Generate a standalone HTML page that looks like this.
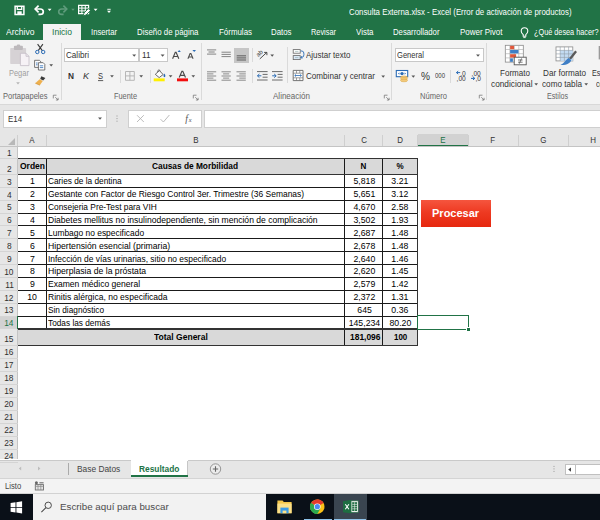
<!DOCTYPE html>
<html><head><meta charset="utf-8"><title>Excel</title>
<style>
*{box-sizing:border-box;margin:0;padding:0}
html,body{width:600px;height:520px;overflow:hidden;background:#fff;font-family:"Liberation Sans",sans-serif;}
.a{position:absolute}
.t{position:absolute;white-space:nowrap;line-height:1}
svg{position:absolute;overflow:visible}
</style></head><body>
<div class="a" style="left:0px;top:0px;width:600.00px;height:40.00px;background:#217346;"></div>
<div class="a" style="left:43px;top:24px;width:37.50px;height:17.00px;background:#f3f3f3;"></div>
<div class="a" style="left:0px;top:40px;width:600.00px;height:63.50px;background:#f3f3f3;"></div>
<div class="a" style="left:0px;top:103.5px;width:600.00px;height:1.00px;background:#d8d8d8;"></div>
<div class="a" style="left:0px;top:104.5px;width:600.00px;height:28.50px;background:#e6e6e6;"></div>
<div class="a" style="left:60.75px;top:43px;width:1.00px;height:57.00px;background:#dadada;"></div>
<div class="a" style="left:201px;top:43px;width:1.00px;height:57.00px;background:#dadada;"></div>
<div class="a" style="left:391px;top:43px;width:1.00px;height:57.00px;background:#dadada;"></div>
<div class="a" style="left:486px;top:43px;width:1.00px;height:57.00px;background:#dadada;"></div>
<div class="a" style="left:119.5px;top:70px;width:1.00px;height:12.50px;background:#dadada;"></div>
<div class="a" style="left:149.5px;top:70px;width:1.00px;height:12.50px;background:#dadada;"></div>
<div class="a" style="left:251.5px;top:48px;width:1.00px;height:14.00px;background:#dadada;"></div>
<div class="a" style="left:251.5px;top:69px;width:1.00px;height:13.50px;background:#dadada;"></div>
<div class="a" style="left:287.2px;top:47.3px;width:1.00px;height:35.70px;background:#dadada;"></div>
<div class="a" style="left:450px;top:69.5px;width:1.00px;height:13.00px;background:#dadada;"></div>
<div class="a" style="left:64px;top:47.7px;width:74.50px;height:14.80px;background:#fff;border:1px solid #c8c8c8;"></div>
<div class="a" style="left:139px;top:47.7px;width:29.00px;height:14.80px;background:#fff;border:1px solid #c8c8c8;"></div>
<div class="a" style="left:394.5px;top:47.7px;width:89.50px;height:14.80px;background:#fff;border:1px solid #c8c8c8;"></div>
<div class="a" style="left:234px;top:47.7px;width:15.00px;height:15.00px;background:#c6c6c6;"></div>
<div class="a" style="left:3px;top:109.5px;width:104.00px;height:18.00px;background:#fff;border:1px solid #cfcfcf;"></div>
<div class="a" style="left:127.5px;top:109.5px;width:74.00px;height:18.00px;background:#fff;border:1px solid #cfcfcf;"></div>
<div class="a" style="left:204px;top:109.5px;width:400.00px;height:18.00px;background:#fff;border:1px solid #cfcfcf;"></div>
<div class="a" style="left:0px;top:459.5px;width:600.00px;height:18.50px;background:#e6e6e6;border-top:1px solid #c9c9c9;"></div>
<div class="a" style="left:130.5px;top:459.5px;width:57.00px;height:16.00px;background:#fff;"></div>
<div class="a" style="left:130.5px;top:475px;width:57.00px;height:1.50px;background:#217346;"></div>
<div class="a" style="left:187px;top:460.5px;width:1.00px;height:14.50px;background:#c6c6c6;"></div>
<div class="a" style="left:67.5px;top:463px;width:1.00px;height:12.00px;background:#aaa;"></div>
<div class="a" style="left:564.6px;top:464.2px;width:39.40px;height:10.40px;background:#fff;border:1px solid #c0c0c0;"></div>
<div class="a" style="left:574.6px;top:464.2px;width:1.00px;height:10.40px;background:#c0c0c0;"></div>
<div class="a" style="left:0px;top:477.7px;width:600.00px;height:15.30px;background:#f3f3f3;border-top:1px solid #d4d4d4;"></div>
<div class="a" style="left:0px;top:492.8px;width:600.00px;height:1.20px;background:#d2d2d2;"></div>
<div class="a" style="left:0px;top:493.9px;width:600.00px;height:26.10px;background:#0a1018;"></div>
<div class="a" style="left:32.6px;top:493.9px;width:233.40px;height:26.10px;background:#f2f2f2;"></div>
<div class="a" style="left:334px;top:493.9px;width:32.50px;height:26.10px;background:#3a4550;"></div>
<div class="a" style="left:334px;top:518.5px;width:32.00px;height:1.50px;background:#8fc3ea;"></div>
<div class="a" style="left:304px;top:518.5px;width:28.00px;height:1.50px;background:#8fc3ea;"></div>
<div class="a" style="left:0px;top:133px;width:600.00px;height:13.00px;background:#e6e6e6;"></div>
<div class="a" style="left:0px;top:145.5px;width:600.00px;height:1.00px;background:#c4c4c4;"></div>
<div class="a" style="left:417.5px;top:134px;width:50.50px;height:12.00px;background:#d2d2d2;"></div>
<div class="a" style="left:417.5px;top:144.9px;width:50.50px;height:1.40px;background:#217346;"></div>
<div class="a" style="left:45.8px;top:135px;width:1.00px;height:11.00px;background:#cfcfcf;"></div>
<div class="a" style="left:344.3px;top:135px;width:1.00px;height:11.00px;background:#cfcfcf;"></div>
<div class="a" style="left:382.0px;top:135px;width:1.00px;height:11.00px;background:#cfcfcf;"></div>
<div class="a" style="left:417.0px;top:135px;width:1.00px;height:11.00px;background:#cfcfcf;"></div>
<div class="a" style="left:467.5px;top:135px;width:1.00px;height:11.00px;background:#cfcfcf;"></div>
<div class="a" style="left:517.5px;top:135px;width:1.00px;height:11.00px;background:#cfcfcf;"></div>
<div class="a" style="left:567.5px;top:135px;width:1.00px;height:11.00px;background:#cfcfcf;"></div>
<div class="a" style="left:17px;top:135px;width:1.00px;height:11.00px;background:#cfcfcf;"></div>
<div class="a" style="left:0px;top:146.5px;width:17.50px;height:312.50px;background:#e6e6e6;"></div>
<div class="a" style="left:17px;top:146.5px;width:1.00px;height:312.50px;background:#c4c4c4;"></div>
<div class="a" style="left:0px;top:157.5px;width:17.50px;height:1.00px;background:#d4d4d4;"></div>
<div class="a" style="left:0px;top:173.9px;width:17.50px;height:1.00px;background:#d4d4d4;"></div>
<div class="a" style="left:0px;top:186.78px;width:17.50px;height:1.00px;background:#d4d4d4;"></div>
<div class="a" style="left:0px;top:199.66px;width:17.50px;height:1.00px;background:#d4d4d4;"></div>
<div class="a" style="left:0px;top:212.54000000000002px;width:17.50px;height:1.00px;background:#d4d4d4;"></div>
<div class="a" style="left:0px;top:225.42000000000002px;width:17.50px;height:1.00px;background:#d4d4d4;"></div>
<div class="a" style="left:0px;top:238.3px;width:17.50px;height:1.00px;background:#d4d4d4;"></div>
<div class="a" style="left:0px;top:251.18px;width:17.50px;height:1.00px;background:#d4d4d4;"></div>
<div class="a" style="left:0px;top:264.06px;width:17.50px;height:1.00px;background:#d4d4d4;"></div>
<div class="a" style="left:0px;top:276.94px;width:17.50px;height:1.00px;background:#d4d4d4;"></div>
<div class="a" style="left:0px;top:289.82px;width:17.50px;height:1.00px;background:#d4d4d4;"></div>
<div class="a" style="left:0px;top:302.70000000000005px;width:17.50px;height:1.00px;background:#d4d4d4;"></div>
<div class="a" style="left:0px;top:315.58000000000004px;width:17.50px;height:1.00px;background:#d4d4d4;"></div>
<div class="a" style="left:0px;top:328.46000000000004px;width:17.50px;height:1.00px;background:#d4d4d4;"></div>
<div class="a" style="left:0px;top:344.9px;width:17.50px;height:1.00px;background:#d4d4d4;"></div>
<div class="a" style="left:0px;top:357.85999999999996px;width:17.50px;height:1.00px;background:#d4d4d4;"></div>
<div class="a" style="left:0px;top:370.82px;width:17.50px;height:1.00px;background:#d4d4d4;"></div>
<div class="a" style="left:0px;top:383.78px;width:17.50px;height:1.00px;background:#d4d4d4;"></div>
<div class="a" style="left:0px;top:396.74px;width:17.50px;height:1.00px;background:#d4d4d4;"></div>
<div class="a" style="left:0px;top:409.7px;width:17.50px;height:1.00px;background:#d4d4d4;"></div>
<div class="a" style="left:0px;top:422.65999999999997px;width:17.50px;height:1.00px;background:#d4d4d4;"></div>
<div class="a" style="left:0px;top:435.62px;width:17.50px;height:1.00px;background:#d4d4d4;"></div>
<div class="a" style="left:0px;top:448.58px;width:17.50px;height:1.00px;background:#d4d4d4;"></div>
<div class="a" style="left:0px;top:461.53999999999996px;width:17.50px;height:1.00px;background:#d4d4d4;"></div>
<div class="a" style="left:0px;top:316.58000000000004px;width:17.00px;height:11.88px;background:#d2d2d2;"></div>
<div class="a" style="left:16.5px;top:316.08000000000004px;width:1.70px;height:12.88px;background:#217346;"></div>
<div class="a" style="left:17.5px;top:158px;width:400.00px;height:16.40px;background:#d9d9d9;"></div>
<div class="a" style="left:17.5px;top:328.96000000000004px;width:400.00px;height:16.44px;background:#d9d9d9;"></div>
<div class="a" style="left:17.5px;top:186.78px;width:400.00px;height:1.00px;background:#1a1a1a;"></div>
<div class="a" style="left:17.5px;top:199.66px;width:400.00px;height:1.00px;background:#1a1a1a;"></div>
<div class="a" style="left:17.5px;top:212.54000000000002px;width:400.00px;height:1.00px;background:#1a1a1a;"></div>
<div class="a" style="left:17.5px;top:225.42000000000002px;width:400.00px;height:1.00px;background:#1a1a1a;"></div>
<div class="a" style="left:17.5px;top:238.3px;width:400.00px;height:1.00px;background:#1a1a1a;"></div>
<div class="a" style="left:17.5px;top:251.18px;width:400.00px;height:1.00px;background:#1a1a1a;"></div>
<div class="a" style="left:17.5px;top:264.06px;width:400.00px;height:1.00px;background:#1a1a1a;"></div>
<div class="a" style="left:17.5px;top:276.94px;width:400.00px;height:1.00px;background:#1a1a1a;"></div>
<div class="a" style="left:17.5px;top:289.82px;width:400.00px;height:1.00px;background:#1a1a1a;"></div>
<div class="a" style="left:17.5px;top:302.70000000000005px;width:400.00px;height:1.00px;background:#1a1a1a;"></div>
<div class="a" style="left:17.5px;top:315.58000000000004px;width:400.00px;height:1.00px;background:#1a1a1a;"></div>
<div class="a" style="left:17.5px;top:328.46000000000004px;width:400.00px;height:1.00px;background:#1a1a1a;"></div>
<div class="a" style="left:45.8px;top:158px;width:1.00px;height:187.40px;background:#1a1a1a;"></div>
<div class="a" style="left:344.3px;top:158px;width:1.00px;height:187.40px;background:#1a1a1a;"></div>
<div class="a" style="left:382.0px;top:158px;width:1.00px;height:187.40px;background:#1a1a1a;"></div>
<div class="a" style="left:45.5px;top:329.66px;width:1.70px;height:15.04px;background:#d9d9d9;"></div>
<div class="a" style="left:17.8px;top:157.72500000000002px;width:400.27px;height:1.15px;background:#333;"></div>
<div class="a" style="left:17.8px;top:173.82500000000002px;width:400.27px;height:1.15px;background:#333;"></div>
<div class="a" style="left:416.925px;top:158.3px;width:1.15px;height:16.10px;background:#333;"></div>
<div class="a" style="left:17.8px;top:328.38500000000005px;width:400.27px;height:1.15px;background:#333;"></div>
<div class="a" style="left:17.8px;top:344.825px;width:400.27px;height:1.15px;background:#333;"></div>
<div class="a" style="left:416.925px;top:328.96000000000004px;width:1.15px;height:16.44px;background:#333;"></div>
<div class="a" style="left:17.8px;top:157.72500000000002px;width:400.27px;height:1.15px;background:#333;"></div>
<div class="a" style="left:17.8px;top:344.825px;width:400.27px;height:1.15px;background:#333;"></div>
<div class="a" style="left:416.925px;top:158.3px;width:1.15px;height:187.10px;background:#333;"></div>
<div class="a" style="left:416.6px;top:315.18000000000006px;width:52.30px;height:14.68px;border:1.7px solid #217346;"></div>
<div class="a" style="left:465.8px;top:326.76000000000005px;width:4.20px;height:4.20px;background:#fff;"></div>
<div class="a" style="left:466.6px;top:327.56000000000006px;width:3.40px;height:3.40px;background:#217346;"></div>
<div class="a" style="left:421px;top:199.5px;width:70.00px;height:27.20px;background:linear-gradient(#f5553e,#ee3a22 45%,#e6270e);"></div>
<div class="t" style="left:432px;top:207.56px;font-size:10.8px;font-weight:700;color:#fff;transform:scaleX(1.02);transform-origin:0 0">Procesar</div>
<svg width="600" height="520" viewBox="0 0 600 520" style="left:0;top:0"><path d="M15.1 6.2H23.9V14.4H15.1Z" fill="none" stroke="#fff" stroke-width="1.5"/><path d="M17.3 6.3V9.3H21.7V6.3" fill="none" stroke="#fff" stroke-width="1.3"/><path d="M17.3 14.4V11.3H21.7V14.4Z" fill="#fff"/><path d="M35.6 9H40.2A3.1 2.7 0 0 1 40.2 14.4H38.4" fill="none" stroke="#fff" stroke-width="1.7"/><path d="M38.6 5.6L35.2 9L38.6 12.4" fill="none" stroke="#fff" stroke-width="1.7"/><path d="M47.65 8.66h3.9099999999999997l-1.95 2.28z" fill="#fff"/><path d="M66.4 9H61.8A3.1 2.7 0 0 0 61.8 14.4H63.6" fill="none" stroke="#5f9c7c" stroke-width="1.6"/><path d="M63.4 5.6L66.8 9L63.4 12.4" fill="none" stroke="#5f9c7c" stroke-width="1.6"/><path d="M71.28 8.78h3.4499999999999997l-1.72 2.04z" fill="#5f9c7c"/><path d="M78.6 5.3H88.6V13.7H78.6Z" fill="none" stroke="#fff" stroke-width="1.2"/><path d="M78.6 8.1H88.6M78.6 10.9H88.6M81.9 5.3V13.7M85.3 5.3V13.7" stroke="#fff" stroke-width="1" fill="none"/><path d="M83.2 15.9L84 13L88.4 8.6L90.4 10.6L86 15Z" fill="#fff" stroke="#217346" stroke-width="0.9"/><path d="M93.64 8.66h3.9099999999999997l-1.95 2.28z" fill="#fff"/><path d="M107.3 9.3H110.7" stroke="#fff" stroke-width="0.9" fill="none"/><path d="M107.05 10.66h3.9099999999999997l-1.95 2.28z" fill="#fff"/><path d="M523.2 36.2V34.6C521.6 33.4 521.2 32 521.2 31A3.3 3.3 0 0 1 527.8 31C527.8 32 527.4 33.4 525.8 34.6V36.2Z" fill="none" stroke="#fff" stroke-width="1.1"/><path d="M523.3 37.6H525.7" stroke="#fff" stroke-width="0.9" fill="none"/><rect x="10.2" y="47.9" width="15.9" height="16.1" rx="0.8" fill="#d6d2d5"/><rect x="13.9" y="45.8" width="9" height="4.2" rx="1" fill="#bdb9bc"/><rect x="16.8" y="44.6" width="3.4" height="2.2" rx="1" fill="#bdb9bc"/><path d="M20.4 53.3H26L29 56.3V65.6H20.4Z" fill="#f6f2f6" stroke="#c4bcc6" stroke-width="0.8"/><path d="M26 53.3V56.3H29" fill="none" stroke="#c4bcc6" stroke-width="0.8"/><path d="M16.16 82.22h3.6799999999999997l-1.84 2.16z" fill="#b5b5b5"/><path d="M37.6 44.2L42.3 50.6M42.9 44.2L38.2 50.6" stroke="#3a3a3a" stroke-width="1.1" fill="none"/><circle cx="37.3" cy="52" r="1.7" fill="none" stroke="#2b6cb5" stroke-width="1"/><circle cx="43.2" cy="52" r="1.7" fill="none" stroke="#2b6cb5" stroke-width="1"/><path d="M34.6 60.3H39.4L41 61.9V67.4H34.6Z" fill="#fff" stroke="#555" stroke-width="0.8"/><path d="M38.4 62.7H43.2L44.8 64.3V70H38.4Z" fill="#fff" stroke="#555" stroke-width="0.8"/><path d="M36 63H37.6M36 64.8H37.6M39.8 65.8H43.2M39.8 67.6H43.2" stroke="#2b6cb5" stroke-width="0.8"/><path d="M49.36 64.22h3.6799999999999997l-1.84 2.16z" fill="#555"/><path d="M41.3 76.3L45.4 77.9L43.2 80.6L40.2 79Z" fill="#3a3a3a"/><path d="M39.6 79.3L42.8 81.1L39.8 85.2L35.3 83.2Z" fill="#eeb04e"/><path d="M35.3 83.2L39.8 85.2" stroke="#c98a2a" stroke-width="0.6"/><path d="M53.3 98.4V95.2H56.5" fill="none" stroke="#777" stroke-width="0.8"/><path d="M55.3 97.2L58.099999999999994 100.0M58.099999999999994 97.8V100.0H55.9" fill="none" stroke="#777" stroke-width="0.8"/><path d="M132.24 54.46h3.9099999999999997l-1.95 2.28z" fill="#555"/><path d="M160.64 54.46h3.9099999999999997l-1.95 2.28z" fill="#555"/><path d="M98 80.6H103.2" stroke="#333" stroke-width="0.8" fill="none"/><path d="M110.16 75.22h3.6799999999999997l-1.84 2.16z" fill="#555"/><path d="M125.5 71.5H134.3V80.3H125.5Z" fill="none" stroke="#b0b0b0" stroke-width="0.9"/><path d="M129.9 71.5V80.3M125.5 75.9H134.3" stroke="#b0b0b0" stroke-width="0.9" fill="none"/><path d="M139.36 75.22h3.6799999999999997l-1.84 2.16z" fill="#555"/><path d="M172.6 58.8L175.3 52.3H176.1L178.8 58.8M173.7 56.5H177.7" fill="none" stroke="#4a4a4a" stroke-width="1.15"/><path d="M177.6 52L179.2 49.9L180.8 52Z" fill="#2b6cb5"/><path d="M187.9 58.8L190.1 53.6H190.9L193.1 58.8M188.8 57H192.2" fill="none" stroke="#4a4a4a" stroke-width="1.05"/><path d="M192.4 50H196L194.2 52.1Z" fill="#2b6cb5"/><path d="M155.3 74.3L159.4 70.6L163.1 74.5L159.2 77.6Z" fill="#fdfdfd" stroke="#555" stroke-width="0.9"/><path d="M157.7 72.2C157 69.6 160.2 69.2 160.3 71.4" fill="none" stroke="#555" stroke-width="0.8"/><path d="M164.3 73.6C165.8 75.4 165.6 77 164.4 77.2C163.2 77 163.2 75.4 164.3 73.6Z" fill="#2b6cb5"/><rect x="153.7" y="78.4" width="11" height="2.9" fill="#fff000"/><path d="M168.76 75.22h3.6799999999999997l-1.84 2.16z" fill="#555"/><path d="M179.2 77.6L181.9 71.3H182.8L185.5 77.6M180.3 75.4H184.4" fill="none" stroke="#4a4a4a" stroke-width="1.15"/><rect x="177" y="78.4" width="11" height="2.9" fill="#f20d0d"/><path d="M191.46 75.22h3.6799999999999997l-1.84 2.16z" fill="#555"/><path d="M193.3 98.4V95.2H196.5" fill="none" stroke="#777" stroke-width="0.8"/><path d="M195.3 97.2L198.10000000000002 100.0M198.10000000000002 97.8V100.0H195.9" fill="none" stroke="#777" stroke-width="0.8"/><path d="M207 49.9H216.2" stroke="#777" stroke-width="0.9" fill="none"/><path d="M208.5 52H214.7" stroke="#777" stroke-width="0.9" fill="none"/><path d="M207 54.1H216.2" stroke="#777" stroke-width="0.9" fill="none"/><path d="M221.5 52.2H230.8" stroke="#777" stroke-width="0.9" fill="none"/><path d="M221.5 54.4H230.8" stroke="#777" stroke-width="0.9" fill="none"/><path d="M221.5 56.6H230.8" stroke="#777" stroke-width="0.9" fill="none"/><path d="M236.7 55.8H246" stroke="#666" stroke-width="1.1" fill="none"/><path d="M236.7 57.9H246" stroke="#666" stroke-width="1.1" fill="none"/><path d="M236.7 60H246" stroke="#666" stroke-width="1.1" fill="none"/><text x="256.6" y="55.8" font-family="Liberation Sans" font-size="6" fill="#3a3a3a" transform="rotate(-40 259 54)">ab</text><path d="M259.8 58.9L266.6 52.6M266.9 55.2V52.4H264.1" fill="none" stroke="#3a3a3a" stroke-width="0.9"/><path d="M270.36 54.52h3.6799999999999997l-1.84 2.16z" fill="#555"/><path d="M207 71.8H216.2" stroke="#777" stroke-width="0.85" fill="none"/><path d="M221.5 71.8H230.8" stroke="#777" stroke-width="0.85" fill="none"/><path d="M236.5 71.8H245.8" stroke="#777" stroke-width="0.85" fill="none"/><path d="M207 73.9H213.39999999999998" stroke="#777" stroke-width="0.85" fill="none"/><path d="M223.1 73.9H229.20000000000002" stroke="#777" stroke-width="0.85" fill="none"/><path d="M239.3 73.9H245.8" stroke="#777" stroke-width="0.85" fill="none"/><path d="M207 76H216.2" stroke="#777" stroke-width="0.85" fill="none"/><path d="M221.5 76H230.8" stroke="#777" stroke-width="0.85" fill="none"/><path d="M236.5 76H245.8" stroke="#777" stroke-width="0.85" fill="none"/><path d="M207 78.1H213.39999999999998" stroke="#777" stroke-width="0.85" fill="none"/><path d="M223.1 78.1H229.20000000000002" stroke="#777" stroke-width="0.85" fill="none"/><path d="M239.3 78.1H245.8" stroke="#777" stroke-width="0.85" fill="none"/><path d="M207 80.2H216.2" stroke="#777" stroke-width="0.85" fill="none"/><path d="M221.5 80.2H230.8" stroke="#777" stroke-width="0.85" fill="none"/><path d="M236.5 80.2H245.8" stroke="#777" stroke-width="0.85" fill="none"/><path d="M257 71.6H267.6" stroke="#6a6a6a" stroke-width="1.0" fill="none"/><path d="M262.6 74.4H267.6" stroke="#6a6a6a" stroke-width="1.0" fill="none"/><path d="M262.6 77.2H267.6" stroke="#6a6a6a" stroke-width="1.0" fill="none"/><path d="M257 80H267.6" stroke="#6a6a6a" stroke-width="1.0" fill="none"/><path d="M272 71.6H282.6" stroke="#6a6a6a" stroke-width="1.0" fill="none"/><path d="M277.6 74.4H282.6" stroke="#6a6a6a" stroke-width="1.0" fill="none"/><path d="M277.6 77.2H282.6" stroke="#6a6a6a" stroke-width="1.0" fill="none"/><path d="M272 80H282.6" stroke="#6a6a6a" stroke-width="1.0" fill="none"/><path d="M261.4 75.8H257.6M259.4 74L257.4 75.8L259.4 77.6" fill="none" stroke="#2b6cb5" stroke-width="1"/><path d="M272.2 75.8H276M274.2 74L276.2 75.8L274.2 77.6" fill="none" stroke="#2b6cb5" stroke-width="1"/><rect x="293.2" y="49.6" width="7" height="3.6" fill="#fff" stroke="#666" stroke-width="0.8"/><rect x="293.2" y="55.6" width="7" height="4" fill="#dbe8f6" stroke="#666" stroke-width="0.8"/><path d="M295 51.4H298.4M295 57.6H298.4" stroke="#8aa" stroke-width="0.6"/><path d="M300.6 51H302A1.6 2.6 0 0 1 302 57.4H301M302.2 56L300.8 57.4L302.2 58.8" stroke="#2b6cb5" stroke-width="0.9" fill="none"/><path d="M293.2 70.4H303V80.6H293.2Z" fill="#fff" stroke="#666" stroke-width="0.9"/><path d="M293.2 73.2H303M293.2 77.8H303M296.5 70.4V73.2M299.8 70.4V73.2M296.5 77.8V80.6M299.8 77.8V80.6" stroke="#777" stroke-width="0.7"/><path d="M294.8 75.5H301.4M296 74.4L294.8 75.5L296 76.6M300.2 74.4L301.4 75.5L300.2 76.6" stroke="#2b6cb5" stroke-width="0.8" fill="none"/><path d="M381.36 75.52h3.6799999999999997l-1.84 2.16z" fill="#555"/><path d="M384.3 98.4V95.2H387.5" fill="none" stroke="#777" stroke-width="0.8"/><path d="M386.3 97.2L389.1 100.0M389.1 97.8V100.0H386.90000000000003" fill="none" stroke="#777" stroke-width="0.8"/><path d="M476.05 54.46h3.9099999999999997l-1.95 2.28z" fill="#555"/><rect x="396.3" y="70.5" width="11.4" height="6.2" fill="#fff" stroke="#2b6cb5" stroke-width="1.1"/><circle cx="402" cy="73.6" r="1.7" fill="#2b6cb5"/><path d="M398 73.6L399.4 72.4V74.8ZM406 73.6L404.6 72.4V74.8Z" fill="#2b6cb5"/><ellipse cx="404" cy="77.2" rx="3.5" ry="1.3" fill="#f3c97a" stroke="#d9a441" stroke-width="0.5"/><ellipse cx="404" cy="78.9" rx="3.5" ry="1.3" fill="#f3c97a" stroke="#d9a441" stroke-width="0.5"/><ellipse cx="404" cy="80.5" rx="3.5" ry="1.3" fill="#f3c97a" stroke="#d9a441" stroke-width="0.5"/><path d="M411.46 75.52h3.6799999999999997l-1.84 2.16z" fill="#555"/><text x="460.2" y="75.6" font-family="Liberation Sans" font-size="6.3" fill="#3a3a3a" textLength="5.6" lengthAdjust="spacingAndGlyphs">,0</text><text x="456.6" y="80.8" font-family="Liberation Sans" font-size="6.3" fill="#3a3a3a" textLength="9.2" lengthAdjust="spacingAndGlyphs">,00</text><path d="M460.2 72.6H456.6M458.2 71.1L456.4 72.6L458.2 74.1" stroke="#2b6cb5" stroke-width="1" fill="none"/><text x="471.6" y="75.6" font-family="Liberation Sans" font-size="6.3" fill="#3a3a3a" textLength="9.2" lengthAdjust="spacingAndGlyphs">,00</text><text x="475.4" y="80.8" font-family="Liberation Sans" font-size="6.3" fill="#3a3a3a" textLength="5.6" lengthAdjust="spacingAndGlyphs">,0</text><path d="M471 78.4H474.8M473 76.9L474.8 78.4L473 79.9" stroke="#2b6cb5" stroke-width="1" fill="none"/><path d="M479.3 98.4V95.2H482.5" fill="none" stroke="#777" stroke-width="0.8"/><path d="M481.3 97.2L484.1 100.0M484.1 97.8V100.0H481.90000000000003" fill="none" stroke="#777" stroke-width="0.8"/><rect x="505.3" y="45.3" width="18" height="16.8" fill="#fff" stroke="#8a8a8a" stroke-width="0.8"/><path d="M505.3 49.5H523.3M505.3 53.7H523.3M505.3 57.9H523.3M509.8 45.3V62.1M514.3 45.3V62.1M518.8 45.3V62.1" stroke="#a8a8a8" stroke-width="0.6"/><rect x="510.1" y="45.8" width="4" height="3.4" fill="#e0573a"/><rect x="510.1" y="50" width="8.4" height="3.4" fill="#3f7fc6"/><rect x="510.1" y="54.2" width="6" height="3.4" fill="#e0573a"/><rect x="510.1" y="58.4" width="2.8" height="3.4" fill="#3f7fc6"/><rect x="514.2" y="57.2" width="12" height="7.6" fill="#fff" stroke="#555" stroke-width="0.9"/><path d="M518 60H522.6M518 62.2H522.6M519.2 63.8L521.6 58.4" stroke="#444" stroke-width="0.7" fill="none"/><path d="M534.36 83.22h3.6799999999999997l-1.84 2.16z" fill="#555"/><rect x="556" y="46.9" width="16.8" height="14" fill="#fff" stroke="#8a8a8a" stroke-width="0.8"/><rect x="560.2" y="50.4" width="12.6" height="10.5" fill="#c3dbf3"/><path d="M556 50.4H572.8M556 53.9H572.8M556 57.4H572.8M560.2 46.9V60.9M564.4 46.9V60.9M568.6 46.9V60.9" stroke="#8f9aa6" stroke-width="0.6"/><path d="M575.2 50.6L577 52L571 59.6L569 58.2Z" fill="#5a5a5a"/><path d="M568.6 58L571.2 60C570.8 63 566.6 65.4 560.4 65C564.4 63.4 565.4 59.8 568.6 58Z" fill="#3f7fc6"/><path d="M584.36 83.22h3.6799999999999997l-1.84 2.16z" fill="#555"/><rect x="598.7" y="46" width="3" height="13.4" fill="#9a9a9a"/><path d="M98.05 117.46h3.9099999999999997l-1.95 2.28z" fill="#555"/><rect x="116.5" y="115.5" width="1" height="1" fill="#999"/><rect x="116.5" y="118.1" width="1" height="1" fill="#999"/><rect x="116.5" y="120.7" width="1" height="1" fill="#999"/><path d="M137 115.2L143.8 122M143.8 115.2L137 122" stroke="#b4b4b4" stroke-width="0.9" fill="none"/><path d="M160.6 119.2L163.4 122L169.4 115" stroke="#b4b4b4" stroke-width="0.9" fill="none"/><text x="185.2" y="121.6" font-family="Liberation Serif" font-style="italic" font-size="9.6" fill="#555">f</text><text x="188.8" y="122" font-family="Liberation Serif" font-style="italic" font-size="6.4" fill="#555">x</text><path d="M15 138V145H8Z" fill="#b8b8b8"/><path d="M21.2 466.6L18.8 468.6L21.2 470.6Z" fill="#bdbdbd"/><path d="M38 466.6L40.4 468.6L38 470.6Z" fill="#bdbdbd"/><circle cx="215.5" cy="469" r="5.2" fill="#ececec" stroke="#8c8c8c" stroke-width="0.9"/><path d="M212.8 469H218.2M215.5 466.3V471.7" stroke="#666" stroke-width="1.1"/><rect x="35.3" y="484.6" width="8.2" height="5.4" fill="#e4e4e4" stroke="#707070" stroke-width="0.9"/><path d="M38 484.6V490M40.8 484.6V490M35.3 486.4H43.5" stroke="#8a8a8a" stroke-width="0.7"/><circle cx="36.4" cy="482.8" r="1.5" fill="#666"/><path d="M39.4 482.8H43.6" stroke="#777" stroke-width="1.2"/><rect x="553.5" y="465.9" width="1" height="1" fill="#9a9a9a"/><rect x="553.5" y="468.4" width="1" height="1" fill="#9a9a9a"/><rect x="553.5" y="470.9" width="1" height="1" fill="#9a9a9a"/><path d="M571 467.4V471.8L568.2 469.6Z" fill="#444"/><path d="M10.6 503L15.5 502.3V506.9H10.6ZM16.4 502.2L22.1 501.3V506.9H16.4ZM10.6 507.8H15.5V512.4L10.6 511.7ZM16.4 507.8H22.1V513.4L16.4 512.5Z" fill="#fff"/><circle cx="48.2" cy="505.3" r="3.2" fill="none" stroke="#444" stroke-width="0.95"/><path d="M45.9 507.7L41.4 512.2" stroke="#444" stroke-width="1.05"/><path d="M277.4 500.6H282.6L283.8 502H291.6V513.2H277.4Z" fill="#f5c84c"/><path d="M277.4 503.6H291.6V513.2H277.4Z" fill="#fbe08a"/><path d="M280.4 507.6H288.6V513.2H280.4Z" fill="#3a9be8"/><path d="M282.6 510.6H286.4V513.2H282.6Z" fill="#fbe08a"/><circle cx="317.3" cy="506.7" r="7.2" fill="#fbc116"/><path d="M317.3 506.7L311.07 503.1A7.2 7.2 0 0 1 323.53 503.1Z" fill="#e33b2e"/><path d="M317.3 499.5A7.2 7.2 0 0 1 323.53 503.1H317.3Z" fill="#e33b2e"/><path d="M311.07 503.1A7.2 7.2 0 0 0 317.3 513.9L320.4 508.5L317.3 506.7Z" fill="#2da94f"/><path d="M311.07 503.1L314.2 508.5L317.3 513.9A7.2 7.2 0 0 1 311.07 503.1Z" fill="#2da94f"/><circle cx="317.3" cy="506.7" r="3.3" fill="#fff"/><circle cx="317.3" cy="506.7" r="2.6" fill="#4a8af4"/><rect x="349.4" y="500.8" width="8.8" height="11.6" fill="#e8efe9" stroke="#1e6e42" stroke-width="0.6"/><rect x="352.2" y="502.2" width="4.8" height="8.8" fill="#1e6e42"/><path d="M354.6 502.2V511M352.2 504.4H357M352.2 506.6H357M352.2 508.8H357" stroke="#e8efe9" stroke-width="0.6"/><path d="M343 501.2L351.4 499.8V513.6L343 512.2Z" fill="#1e6e42"/><path d="M345.3 504.3L348.9 509.3M348.9 504.3L345.3 509.3" stroke="#fff" stroke-width="1.1"/></svg>
<div class="t" style="left:349.00px;top:8.00px;font-size:9.1px;color:#fff;transform:scaleX(0.8632);transform-origin:0 0;">Consulta Externa.xlsx - Excel (Error de activación de productos)</div>
<div class="t" style="left:5.50px;top:28.00px;font-size:9.1px;color:#fff;transform:scaleX(0.9397);transform-origin:0 0;">Archivo</div>
<div class="t" style="left:51.50px;top:28.00px;font-size:9.1px;color:#217346;transform:scaleX(0.9419);transform-origin:0 0;">Inicio</div>
<div class="t" style="left:90.50px;top:28.00px;font-size:9.1px;color:#fff;transform:scaleX(0.8430);transform-origin:0 0;">Insertar</div>
<div class="t" style="left:137.00px;top:28.00px;font-size:9.1px;color:#fff;transform:scaleX(0.8687);transform-origin:0 0;">Diseño de página</div>
<div class="t" style="left:218.50px;top:28.00px;font-size:9.1px;color:#fff;transform:scaleX(0.8706);transform-origin:0 0;">Fórmulas</div>
<div class="t" style="left:271.00px;top:28.00px;font-size:9.1px;color:#fff;transform:scaleX(0.8626);transform-origin:0 0;">Datos</div>
<div class="t" style="left:311.00px;top:28.00px;font-size:9.1px;color:#fff;transform:scaleX(0.8109);transform-origin:0 0;">Revisar</div>
<div class="t" style="left:355.50px;top:28.00px;font-size:9.1px;color:#fff;transform:scaleX(0.8723);transform-origin:0 0;">Vista</div>
<div class="t" style="left:393.00px;top:28.00px;font-size:9.1px;color:#fff;transform:scaleX(0.8517);transform-origin:0 0;">Desarrollador</div>
<div class="t" style="left:459.50px;top:28.00px;font-size:9.1px;color:#fff;transform:scaleX(0.8757);transform-origin:0 0;">Power Pivot</div>
<div class="t" style="left:534.00px;top:28.00px;font-size:9.1px;color:#fff;transform:scaleX(0.8023);transform-origin:0 0;">¿Qué desea hacer?</div>
<div class="t" style="left:8.60px;top:69.00px;font-size:9.1px;color:#9e9e9e;transform:scaleX(0.8196);transform-origin:0 0;">Pegar</div>
<div class="t" style="left:2.50px;top:92.00px;font-size:9.1px;color:#666;transform:scaleX(0.8303);transform-origin:0 0;">Portapapeles</div>
<div class="t" style="left:66.00px;top:51.00px;font-size:9.1px;color:#333;transform:scaleX(0.8921);transform-origin:0 0;">Calibri</div>
<div class="t" style="left:141.50px;top:51.00px;font-size:9.1px;color:#333;transform:scaleX(0.8992);transform-origin:0 0;">11</div>
<div class="t" style="left:68.00px;top:72.00px;font-size:9.3px;color:#333;transform:scaleX(0.8930);transform-origin:0 0;font-weight:700;">N</div>
<div class="t" style="left:83.00px;top:72.00px;font-size:9.3px;color:#333;transform:scaleX(0.9673);transform-origin:0 0;font-style:italic;">K</div>
<div class="t" style="left:98.00px;top:72.00px;font-size:9.3px;color:#333;transform:scaleX(0.8060);transform-origin:0 0;">S</div>
<div class="t" style="left:114.00px;top:92.00px;font-size:9.1px;color:#666;transform:scaleX(0.8124);transform-origin:0 0;">Fuente</div>
<div class="t" style="left:272.50px;top:92.00px;font-size:9.1px;color:#666;transform:scaleX(0.8816);transform-origin:0 0;">Alineación</div>
<div class="t" style="left:306.00px;top:51.00px;font-size:9.1px;color:#333;transform:scaleX(0.8784);transform-origin:0 0;">Ajustar texto</div>
<div class="t" style="left:306.00px;top:72.00px;font-size:9.1px;color:#333;transform:scaleX(0.8910);transform-origin:0 0;">Combinar y centrar</div>
<div class="t" style="left:397.00px;top:51.00px;font-size:9.1px;color:#333;transform:scaleX(0.8344);transform-origin:0 0;">General</div>
<div class="t" style="left:421.00px;top:71.00px;font-size:10.5px;color:#333;transform:scaleX(0.9632);transform-origin:0 0;">%</div>
<div class="t" style="left:434.70px;top:72.00px;font-size:7.0px;color:#333;transform:scaleX(0.8556);transform-origin:0 0;">000</div>
<div class="t" style="left:420.00px;top:92.00px;font-size:9.1px;color:#666;transform:scaleX(0.8348);transform-origin:0 0;">Número</div>
<div class="t" style="left:500.00px;top:69.00px;font-size:9.1px;color:#333;transform:scaleX(0.8860);transform-origin:0 0;">Formato</div>
<div class="t" style="left:491.00px;top:80.00px;font-size:9.1px;color:#333;transform:scaleX(0.9121);transform-origin:0 0;">condicional</div>
<div class="t" style="left:543.00px;top:69.00px;font-size:9.1px;color:#333;transform:scaleX(0.8955);transform-origin:0 0;">Dar formato</div>
<div class="t" style="left:542.00px;top:80.00px;font-size:9.1px;color:#333;transform:scaleX(0.8992);transform-origin:0 0;">como tabla</div>
<div class="t" style="left:592.00px;top:69.00px;font-size:9.1px;color:#333;transform:scaleX(0.7837);transform-origin:0 0;">Estilos</div>
<div class="t" style="left:596.00px;top:80.00px;font-size:9.1px;color:#333;transform:scaleX(0.7816);transform-origin:0 0;">celda</div>
<div class="t" style="left:547.00px;top:92.00px;font-size:9.1px;color:#666;transform:scaleX(0.7837);transform-origin:0 0;">Estilos</div>
<div class="t" style="left:8.30px;top:115.00px;font-size:9.1px;color:#333;transform:scaleX(0.8710);transform-origin:0 0;">E14</div>
<div class="t" style="left:77.00px;top:465.00px;font-size:9.1px;color:#444;transform:scaleX(0.9210);transform-origin:0 0;">Base Datos</div>
<div class="t" style="left:139.00px;top:465.00px;font-size:9.1px;color:#217346;transform:scaleX(0.9211);transform-origin:0 0;font-weight:700;">Resultado</div>
<div class="t" style="left:4.80px;top:482.00px;font-size:9.1px;color:#444;transform:scaleX(0.8429);transform-origin:0 0;">Listo</div>
<div class="t" style="left:60.20px;top:503.00px;font-size:9.2px;color:#4c4c4c;transform:scaleX(1.0652);transform-origin:0 0;">Escribe aquí para buscar</div>
<div class="t" style="left:29.10px;top:136.00px;font-size:8.4px;color:#333;transform:scaleX(0.9500);transform-origin:50% 0;">A</div>
<div class="t" style="left:192.75px;top:136.00px;font-size:8.4px;color:#333;transform:scaleX(0.9500);transform-origin:50% 0;">B</div>
<div class="t" style="left:360.62px;top:136.00px;font-size:8.4px;color:#333;transform:scaleX(0.9500);transform-origin:50% 0;">C</div>
<div class="t" style="left:396.97px;top:136.00px;font-size:8.4px;color:#333;transform:scaleX(0.9500);transform-origin:50% 0;">D</div>
<div class="t" style="left:439.95px;top:136.00px;font-size:8.4px;color:#217346;transform:scaleX(0.9500);transform-origin:50% 0;">E</div>
<div class="t" style="left:490.44px;top:136.00px;font-size:8.4px;color:#333;transform:scaleX(0.9500);transform-origin:50% 0;">F</div>
<div class="t" style="left:539.74px;top:136.00px;font-size:8.4px;color:#333;transform:scaleX(0.9500);transform-origin:50% 0;">G</div>
<div class="t" style="left:589.97px;top:136.00px;font-size:8.4px;color:#333;transform:scaleX(0.9500);transform-origin:50% 0;">H</div>
<div class="t" style="left:6.81px;top:149.00px;font-size:8.6px;color:#303030;transform:scaleX(0.9700);transform-origin:50% 0;">1</div>
<div class="t" style="left:6.81px;top:165.00px;font-size:8.6px;color:#303030;transform:scaleX(0.9700);transform-origin:50% 0;">2</div>
<div class="t" style="left:6.81px;top:178.00px;font-size:8.6px;color:#303030;transform:scaleX(0.9700);transform-origin:50% 0;">3</div>
<div class="t" style="left:6.81px;top:191.00px;font-size:8.6px;color:#303030;transform:scaleX(0.9700);transform-origin:50% 0;">4</div>
<div class="t" style="left:6.81px;top:203.00px;font-size:8.6px;color:#303030;transform:scaleX(0.9700);transform-origin:50% 0;">5</div>
<div class="t" style="left:6.81px;top:216.00px;font-size:8.6px;color:#303030;transform:scaleX(0.9700);transform-origin:50% 0;">6</div>
<div class="t" style="left:6.81px;top:229.00px;font-size:8.6px;color:#303030;transform:scaleX(0.9700);transform-origin:50% 0;">7</div>
<div class="t" style="left:6.81px;top:242.00px;font-size:8.6px;color:#303030;transform:scaleX(0.9700);transform-origin:50% 0;">8</div>
<div class="t" style="left:6.81px;top:255.00px;font-size:8.6px;color:#303030;transform:scaleX(0.9700);transform-origin:50% 0;">9</div>
<div class="t" style="left:4.42px;top:268.00px;font-size:8.6px;color:#303030;transform:scaleX(0.9700);transform-origin:50% 0;">10</div>
<div class="t" style="left:4.74px;top:281.00px;font-size:8.6px;color:#303030;transform:scaleX(0.9700);transform-origin:50% 0;">11</div>
<div class="t" style="left:4.42px;top:294.00px;font-size:8.6px;color:#303030;transform:scaleX(0.9700);transform-origin:50% 0;">12</div>
<div class="t" style="left:4.42px;top:306.00px;font-size:8.6px;color:#303030;transform:scaleX(0.9700);transform-origin:50% 0;">13</div>
<div class="t" style="left:4.42px;top:319.00px;font-size:8.6px;color:#217346;transform:scaleX(0.9700);transform-origin:50% 0;">14</div>
<div class="t" style="left:4.42px;top:335.00px;font-size:8.6px;color:#303030;transform:scaleX(0.9700);transform-origin:50% 0;">15</div>
<div class="t" style="left:4.42px;top:348.00px;font-size:8.6px;color:#303030;transform:scaleX(0.9700);transform-origin:50% 0;">16</div>
<div class="t" style="left:4.42px;top:361.00px;font-size:8.6px;color:#303030;transform:scaleX(0.9700);transform-origin:50% 0;">17</div>
<div class="t" style="left:4.42px;top:374.00px;font-size:8.6px;color:#303030;transform:scaleX(0.9700);transform-origin:50% 0;">18</div>
<div class="t" style="left:4.42px;top:387.00px;font-size:8.6px;color:#303030;transform:scaleX(0.9700);transform-origin:50% 0;">19</div>
<div class="t" style="left:4.42px;top:400.00px;font-size:8.6px;color:#303030;transform:scaleX(0.9700);transform-origin:50% 0;">20</div>
<div class="t" style="left:4.42px;top:413.00px;font-size:8.6px;color:#303030;transform:scaleX(0.9700);transform-origin:50% 0;">21</div>
<div class="t" style="left:4.42px;top:426.00px;font-size:8.6px;color:#303030;transform:scaleX(0.9700);transform-origin:50% 0;">22</div>
<div class="t" style="left:4.42px;top:439.00px;font-size:8.6px;color:#303030;transform:scaleX(0.9700);transform-origin:50% 0;">23</div>
<div class="t" style="left:4.42px;top:452.00px;font-size:8.6px;color:#303030;transform:scaleX(0.9700);transform-origin:50% 0;">24</div>
<div class="t" style="left:29.87px;top:177.00px;font-size:9.1px;color:#000;transform:scaleX(0.9600);transform-origin:50% 0;">1</div>
<div class="t" style="left:47.90px;top:177.00px;font-size:9.1px;color:#000;transform:scaleX(0.9099);transform-origin:0 0;">Caries de la dentina</div>
<div class="t" style="left:352.92px;top:177.00px;font-size:9.1px;color:#000;transform:scaleX(0.9600);transform-origin:50% 0;">5,818</div>
<div class="t" style="left:391.35px;top:177.00px;font-size:9.1px;color:#000;transform:scaleX(0.9600);transform-origin:50% 0;">3.21</div>
<div class="t" style="left:29.87px;top:190.00px;font-size:9.1px;color:#000;transform:scaleX(0.9600);transform-origin:50% 0;">2</div>
<div class="t" style="left:47.90px;top:190.00px;font-size:9.1px;color:#000;transform:scaleX(0.9297);transform-origin:0 0;">Gestante con Factor de Riesgo Control 3er. Trimestre (36 Semanas)</div>
<div class="t" style="left:352.92px;top:190.00px;font-size:9.1px;color:#000;transform:scaleX(0.9600);transform-origin:50% 0;">5,651</div>
<div class="t" style="left:391.35px;top:190.00px;font-size:9.1px;color:#000;transform:scaleX(0.9600);transform-origin:50% 0;">3.12</div>
<div class="t" style="left:29.87px;top:203.00px;font-size:9.1px;color:#000;transform:scaleX(0.9600);transform-origin:50% 0;">3</div>
<div class="t" style="left:47.90px;top:203.00px;font-size:9.1px;color:#000;transform:scaleX(0.9198);transform-origin:0 0;">Consejeria Pre-Test para VIH</div>
<div class="t" style="left:352.92px;top:203.00px;font-size:9.1px;color:#000;transform:scaleX(0.9600);transform-origin:50% 0;">4,670</div>
<div class="t" style="left:391.35px;top:203.00px;font-size:9.1px;color:#000;transform:scaleX(0.9600);transform-origin:50% 0;">2.58</div>
<div class="t" style="left:29.87px;top:216.00px;font-size:9.1px;color:#000;transform:scaleX(0.9600);transform-origin:50% 0;">4</div>
<div class="t" style="left:47.90px;top:216.00px;font-size:9.1px;color:#000;transform:scaleX(0.9406);transform-origin:0 0;">Diabetes mellitus no insulinodependiente, sin mención de complicación</div>
<div class="t" style="left:352.92px;top:216.00px;font-size:9.1px;color:#000;transform:scaleX(0.9600);transform-origin:50% 0;">3,502</div>
<div class="t" style="left:391.35px;top:216.00px;font-size:9.1px;color:#000;transform:scaleX(0.9600);transform-origin:50% 0;">1.93</div>
<div class="t" style="left:29.87px;top:229.00px;font-size:9.1px;color:#000;transform:scaleX(0.9600);transform-origin:50% 0;">5</div>
<div class="t" style="left:47.90px;top:229.00px;font-size:9.1px;color:#000;transform:scaleX(0.9271);transform-origin:0 0;">Lumbago no especificado</div>
<div class="t" style="left:352.92px;top:229.00px;font-size:9.1px;color:#000;transform:scaleX(0.9600);transform-origin:50% 0;">2,687</div>
<div class="t" style="left:391.35px;top:229.00px;font-size:9.1px;color:#000;transform:scaleX(0.9600);transform-origin:50% 0;">1.48</div>
<div class="t" style="left:29.87px;top:242.00px;font-size:9.1px;color:#000;transform:scaleX(0.9600);transform-origin:50% 0;">6</div>
<div class="t" style="left:47.90px;top:242.00px;font-size:9.1px;color:#000;transform:scaleX(0.9511);transform-origin:0 0;">Hipertensión esencial (primaria)</div>
<div class="t" style="left:352.92px;top:242.00px;font-size:9.1px;color:#000;transform:scaleX(0.9600);transform-origin:50% 0;">2,678</div>
<div class="t" style="left:391.35px;top:242.00px;font-size:9.1px;color:#000;transform:scaleX(0.9600);transform-origin:50% 0;">1.48</div>
<div class="t" style="left:29.87px;top:255.00px;font-size:9.1px;color:#000;transform:scaleX(0.9600);transform-origin:50% 0;">7</div>
<div class="t" style="left:47.90px;top:255.00px;font-size:9.1px;color:#000;transform:scaleX(0.9247);transform-origin:0 0;">Infección de vías urinarias, sitio no especificado</div>
<div class="t" style="left:352.92px;top:255.00px;font-size:9.1px;color:#000;transform:scaleX(0.9600);transform-origin:50% 0;">2,640</div>
<div class="t" style="left:391.35px;top:255.00px;font-size:9.1px;color:#000;transform:scaleX(0.9600);transform-origin:50% 0;">1.46</div>
<div class="t" style="left:29.87px;top:267.00px;font-size:9.1px;color:#000;transform:scaleX(0.9600);transform-origin:50% 0;">8</div>
<div class="t" style="left:47.90px;top:267.00px;font-size:9.1px;color:#000;transform:scaleX(0.9513);transform-origin:0 0;">Hiperplasia de la próstata</div>
<div class="t" style="left:352.92px;top:267.00px;font-size:9.1px;color:#000;transform:scaleX(0.9600);transform-origin:50% 0;">2,620</div>
<div class="t" style="left:391.35px;top:267.00px;font-size:9.1px;color:#000;transform:scaleX(0.9600);transform-origin:50% 0;">1.45</div>
<div class="t" style="left:29.87px;top:280.00px;font-size:9.1px;color:#000;transform:scaleX(0.9600);transform-origin:50% 0;">9</div>
<div class="t" style="left:47.90px;top:280.00px;font-size:9.1px;color:#000;transform:scaleX(0.9390);transform-origin:0 0;">Examen médico general</div>
<div class="t" style="left:352.92px;top:280.00px;font-size:9.1px;color:#000;transform:scaleX(0.9600);transform-origin:50% 0;">2,579</div>
<div class="t" style="left:391.35px;top:280.00px;font-size:9.1px;color:#000;transform:scaleX(0.9600);transform-origin:50% 0;">1.42</div>
<div class="t" style="left:27.34px;top:293.00px;font-size:9.1px;color:#000;transform:scaleX(0.9600);transform-origin:50% 0;">10</div>
<div class="t" style="left:47.90px;top:293.00px;font-size:9.1px;color:#000;transform:scaleX(0.9388);transform-origin:0 0;">Rinitis alérgica, no especificada</div>
<div class="t" style="left:352.92px;top:293.00px;font-size:9.1px;color:#000;transform:scaleX(0.9600);transform-origin:50% 0;">2,372</div>
<div class="t" style="left:391.35px;top:293.00px;font-size:9.1px;color:#000;transform:scaleX(0.9600);transform-origin:50% 0;">1.31</div>
<div class="t" style="left:47.90px;top:306.00px;font-size:9.1px;color:#000;transform:scaleX(0.9094);transform-origin:0 0;">Sin diagnóstico</div>
<div class="t" style="left:356.71px;top:306.00px;font-size:9.1px;color:#000;transform:scaleX(0.9600);transform-origin:50% 0;">645</div>
<div class="t" style="left:391.35px;top:306.00px;font-size:9.1px;color:#000;transform:scaleX(0.9600);transform-origin:50% 0;">0.36</div>
<div class="t" style="left:47.90px;top:319.00px;font-size:9.1px;color:#000;transform:scaleX(0.9099);transform-origin:0 0;">Todas las demás</div>
<div class="t" style="left:347.86px;top:319.00px;font-size:9.1px;color:#000;transform:scaleX(0.9600);transform-origin:50% 0;">145,234</div>
<div class="t" style="left:388.82px;top:319.00px;font-size:9.1px;color:#000;transform:scaleX(0.9600);transform-origin:50% 0;">80.20</div>
<div class="t" style="left:19.70px;top:162.00px;font-size:9.1px;color:#000;transform:scaleX(0.9335);transform-origin:0 0;font-weight:700;">Orden</div>
<div class="t" style="left:152.20px;top:162.00px;font-size:9.1px;color:#000;transform:scaleX(0.9149);transform-origin:0 0;font-weight:700;">Causas de Morbilidad</div>
<div class="t" style="left:360.46px;top:162.00px;font-size:9.1px;color:#000;transform:scaleX(0.8850);transform-origin:50% 0;font-weight:700;">N</div>
<div class="t" style="left:395.95px;top:162.00px;font-size:9.1px;color:#000;transform:scaleX(0.8850);transform-origin:50% 0;font-weight:700;">%</div>
<div class="t" style="left:154.20px;top:333.00px;font-size:9.1px;color:#000;transform:scaleX(0.9364);transform-origin:0 0;font-weight:700;">Total General</div>
<div class="t" style="left:349.50px;top:333.00px;font-size:9.1px;color:#000;transform:scaleX(0.9278);transform-origin:0 0;font-weight:700;">181,096</div>
<div class="t" style="left:394.20px;top:333.00px;font-size:9.1px;color:#000;transform:scaleX(0.8757);transform-origin:0 0;font-weight:700;">100</div>
</body></html>
